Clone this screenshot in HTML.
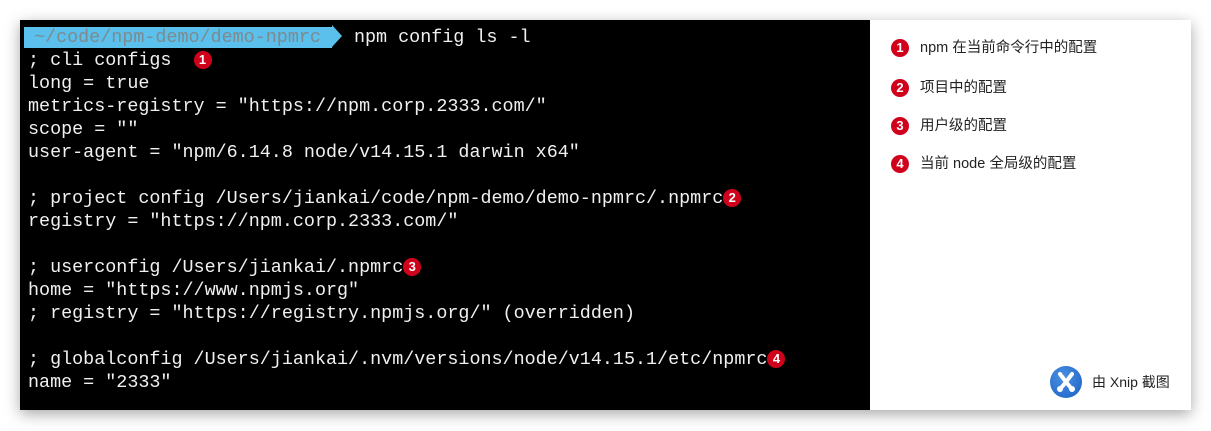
<!DOCTYPE html>
<html><head><meta charset="utf-8"><style>
body{margin:0;width:1211px;height:431px;background:#fff;position:relative;overflow:hidden}
.win{position:absolute;left:20px;top:20px;width:1171px;height:390px;box-shadow:0 4px 14px rgba(0,0,0,.35);background:#fff}
.term{position:absolute;left:0;top:0;width:850px;height:390px;background:#000}
pre{position:absolute;left:8px;top:4.5px;margin:0;font-family:"Liberation Mono",monospace;font-size:18.4px;line-height:23px;color:#f0f0f0;letter-spacing:0}
.pr{background:#5bc0eb;color:#7d8a8f;padding:0 0 0 10px;position:relative;margin-left:-4px}
.arr{display:inline-block;width:0;height:0;border-top:11px solid transparent;border-bottom:11px solid transparent;border-left:10px solid #5bc0eb;vertical-align:-5px;margin-right:12px}
.b{display:inline-block;width:18px;height:18px;border-radius:50%;background:#d0021b;color:#fff;font:bold 13px/18px "Liberation Sans",sans-serif;text-align:center;vertical-align:1px}
.side{position:absolute;left:850px;top:0;width:321px;height:390px;font-family:"Liberation Sans","Noto Sans CJK SC",sans-serif;font-size:14.5px;color:#222}
.it{position:absolute;left:21px;height:20px;line-height:20px}
.it .b{margin-right:11px;vertical-align:0}
.logo{position:absolute;left:180px;top:346px;width:32px;height:32px;border-radius:50%;background:radial-gradient(circle at 40% 35%,#4a90e2,#1a5fc4)}
.xn{position:absolute;left:222px;top:352px;font-size:14px}
</style></head><body>
<div class="win"><div class="term"><pre><span class="pr">~/code/npm-demo/demo-npmrc </span><span class="arr"></span>npm config ls -l
; cli configs  <span class="b">1</span>
long = true
metrics-registry = "https://npm.corp.2333.com/"
scope = ""
user-agent = "npm/6.14.8 node/v14.15.1 darwin x64"

; project config /Users/jiankai/code/npm-demo/demo-npmrc/.npmrc<span class="b">2</span>
registry = "https://npm.corp.2333.com/"

; userconfig /Users/jiankai/.npmrc<span class="b">3</span>
home = "https://www.npmjs.org"
; registry = "https://registry.npmjs.org/" (overridden)

; globalconfig /Users/jiankai/.nvm/versions/node/v14.15.1/etc/npmrc<span class="b">4</span>
name = "2333"</pre></div>
<div class="side">
<div class="it" style="top:18px"><span class="b">1</span>npm 在当前命令行中的配置</div>
<div class="it" style="top:58px"><span class="b">2</span>项目中的配置</div>
<div class="it" style="top:96px"><span class="b">3</span>用户级的配置</div>
<div class="it" style="top:134px"><span class="b">4</span>当前 node 全局级的配置</div>
<div class="logo"><svg width="32" height="32" viewBox="0 0 32 32"><path d="M10 8 L16 16 L22 8 M16 16 L11 22 M16 16 L21 22" stroke="#fff" stroke-width="4" fill="none" stroke-linecap="round"/><circle cx="10" cy="23" r="3" fill="#fff"/><circle cx="22" cy="23" r="3" fill="#fff"/></svg></div>
<div class="xn">由 Xnip 截图</div>
</div></div>
</body></html>
